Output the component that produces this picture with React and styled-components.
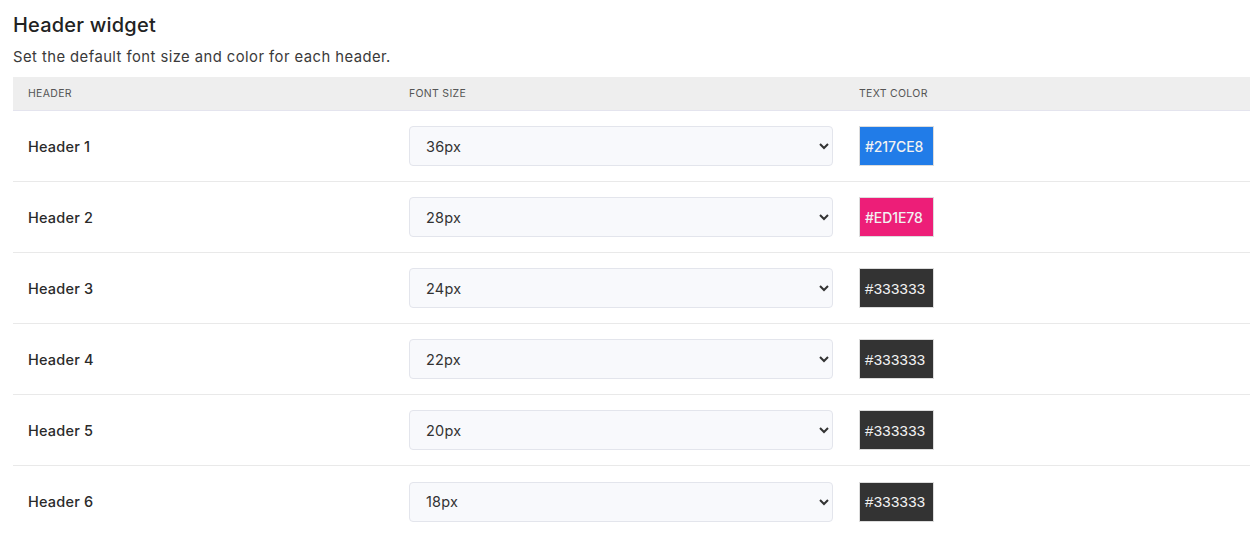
import React from "react";
import styled, { createGlobalStyle } from "styled-components";

const Global = createGlobalStyle`
  html, body { margin: 0; padding: 0; background: #fff; }
  body { font-family: Inter, "Noto Sans", sans-serif; color: #222; }
  * { box-sizing: border-box; }
`;

const Page = styled.div`
  padding: 10px 0 0 13px;
`;

const Title = styled.h2`
  margin: 0;
  font-size: 20px;
  font-weight: 500;
  line-height: 30px;
  letter-spacing: 0.2px;
  color: #222;
`;

const Subtitle = styled.p`
  margin: 6px 0 9px;
  font-size: 14.8px;
  line-height: 22px;
  letter-spacing: 0.45px;
  color: #3a3a3a;
`;

const Table = styled.div`
  width: 1237px;
`;

const Row = styled.div`
  display: grid;
  grid-template-columns: 381px 450px 1fr;
  align-items: center;
  height: ${(p) => (p.$head ? "34px" : "71px")};
  background: ${(p) => (p.$head ? "#eeeeee" : "#fff")};
  border-bottom: 1px solid ${(p) => (p.$head ? "#e4e4ee" : "#e9e9e9")};
  &:last-child { border-bottom: none; }
`;

const HeadCell = styled.div`
  padding: 0 15px;
  font-size: 10.5px;
  text-transform: uppercase;
  color: #555;
  letter-spacing: 0.3px;
`;

const Cell = styled.div`
  padding: 0 15px;
  font-size: 14.5px;
  font-weight: 500;
  letter-spacing: 0.2px;
  color: #2a2a2a;
`;

const Select = styled.select`
  width: 424px;
  height: 40px;
  padding: 0 12px;
  font-family: Inter, "Noto Sans", sans-serif;
  font-size: 14.5px;
  letter-spacing: 0.2px;
  color: #333;
  background: #f8f9fc;
  border: 1px solid #e3e5ec;
  border-radius: 4px;
  outline: none;
`;

const Swatch = styled.div`
  width: 75px;
  height: 40px;
  display: flex;
  align-items: center;
  padding-left: 5px;
  background: ${(p) => p.$color};
  border: 1px solid #dcdcdc;
  color: #f2f2f2;
  font-family: ${(p) => (p.$plain ? '"Liberation Sans", Arial, sans-serif' : 'Inter, "Noto Sans", sans-serif')};
  font-size: ${(p) => (p.$plain ? "15px" : "14px")};
  letter-spacing: ${(p) => (p.$plain ? "0.3px" : "-0.1px")};
`;

const sizes = ["36px", "28px", "24px", "22px", "20px", "18px"];
const rows = [
  { name: "Header 1", size: "36px", color: "#217CE8", plain: false },
  { name: "Header 2", size: "28px", color: "#ED1E78", plain: false },
  { name: "Header 3", size: "24px", color: "#333333", plain: true },
  { name: "Header 4", size: "22px", color: "#333333", plain: true },
  { name: "Header 5", size: "20px", color: "#333333", plain: true },
  { name: "Header 6", size: "18px", color: "#333333", plain: true },
];

export default function App() {
  return (
    <Page>
      <Global />
      <Title>Header widget</Title>
      <Subtitle>Set the default font size and color for each header.</Subtitle>
      <Table>
        <Row $head>
          <HeadCell>Header</HeadCell>
          <HeadCell>Font size</HeadCell>
          <HeadCell>Text color</HeadCell>
        </Row>
        {rows.map((r) => (
          <Row key={r.name}>
            <Cell>{r.name}</Cell>
            <Cell>
              <Select defaultValue={r.size}>
                {sizes.map((s) => (
                  <option key={s} value={s}>{s}</option>
                ))}
              </Select>
            </Cell>
            <Cell>
              <Swatch $color={r.color} $plain={r.plain}>{r.color.toUpperCase()}</Swatch>
            </Cell>
          </Row>
        ))}
      </Table>
    </Page>
  );
}
